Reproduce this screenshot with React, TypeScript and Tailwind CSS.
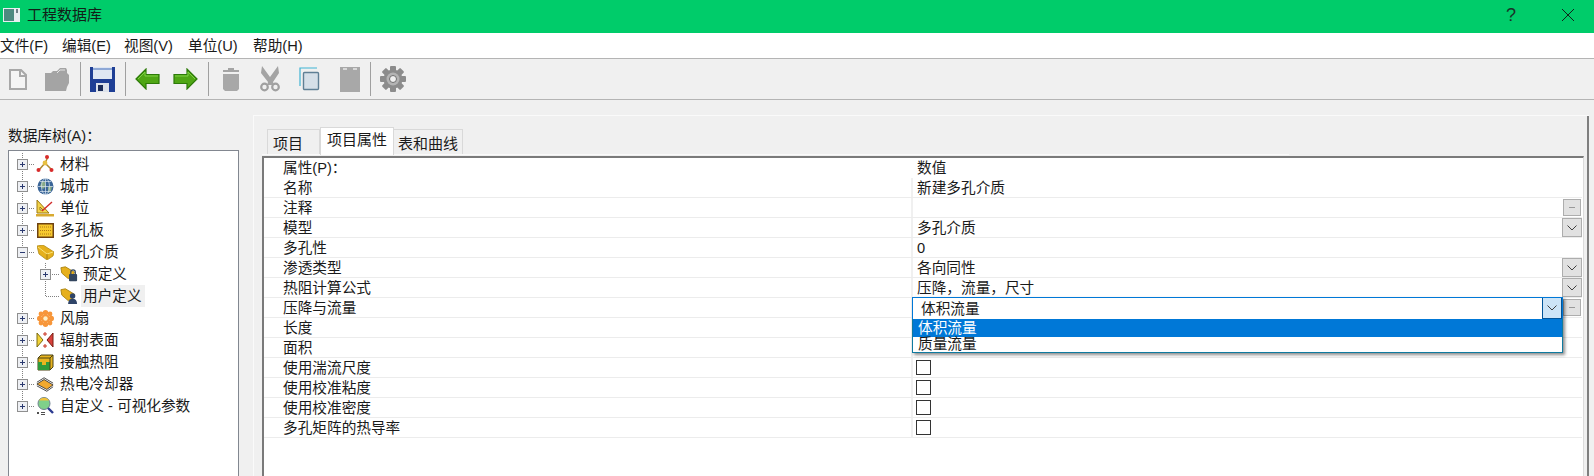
import React from "react";

const FONT = "font-['Liberation_Sans','Noto_Sans_CJK_SC',sans-serif]";

const Sep = () => <div className="w-px h-[34px] bg-[#a0a0a0] shrink-0" />;

const ToolBtn = ({ children, w = "w-[40px]" }: { children: React.ReactNode; w?: string }) => (
  <div className={`${w} h-[34px] flex items-center justify-center shrink-0`}>{children}</div>
);

const IconNew = () => (
  <svg width="18" height="21" viewBox="0 0 18 21">
    <path d="M1 1h11l5 5v14H1z" fill="#f4f4f4" stroke="#a8a8a8" strokeWidth="2" />
    <path d="M11 1v6h6" fill="none" stroke="#a8a8a8" strokeWidth="2" />
  </svg>
);
const IconOpen = () => (
  <svg width="25" height="25" viewBox="0 0 25 25">
    <path d="M1 6h6l2-2h4l3-3h6l1 2v3l2 2v8l-2 4-1 4H1z" fill="#a4a4a4" />
    <path d="M13 6l3-3h5" fill="none" stroke="#e4e4e4" strokeWidth="1" />
  </svg>
);
const IconSave = () => (
  <svg width="25" height="25" viewBox="0 0 25 25">
    <path d="M0 0h25v25H0z" fill="#1f3f95" />
    <path d="M3 0h19v12H3z" fill="#dfe7f3" />
    <path d="M3 1h19v2H3z" fill="#8ea8d6" />
    <path d="M6 16h13v9H6z" fill="#dde2ea" />
    <path d="M8 18h5v6H8z" fill="#1c2c58" />
  </svg>
);
const IconArrow = ({ dir }: { dir: "l" | "r" }) => (
  <svg width="25" height="22" viewBox="0 0 25 22" className={dir === "r" ? "-scale-x-100" : ""}>
    <path d="M1 11L11 1v5.500h13v9H11V21z" fill="#4fa614" stroke="#2c7a08" strokeWidth="1.200" />
    <path d="M3 11l7-7v4h13" fill="none" stroke="#7fd044" strokeWidth="1" />
  </svg>
);
const IconTrash = () => (
  <svg width="18" height="24" viewBox="0 0 18 24">
    <path d="M6 1h6v2h5v2H1V3h5z" fill="#a4a4a4" />
    <path d="M1 7h16v15l-2 2H3l-2-2z" fill="#a8a8a8" />
  </svg>
);
const IconCut = () => (
  <svg width="20" height="26" viewBox="0 0 20 26">
    <path d="M2 0l8 11 8-11 1 7-6 9 1 3H7l1-3-7-9z" fill="#a4a4a4" />
    <circle cx="4.500" cy="21" r="3.300" fill="#f0f0f0" stroke="#a0a0a0" strokeWidth="2.200" />
    <circle cx="15.500" cy="21" r="3.300" fill="#f0f0f0" stroke="#a0a0a0" strokeWidth="2.200" />
  </svg>
);
const IconCopy = () => (
  <svg width="21" height="24" viewBox="0 0 21 24">
    <path d="M1 19V1h17" fill="none" stroke="#3fb4d4" strokeWidth="1.200" />
    <rect x="4.500" y="5.500" width="15" height="17" rx="1" fill="#d5dfe8" stroke="#5f7f95" strokeWidth="1.400" />
  </svg>
);
const IconPaste = () => (
  <svg width="22" height="26" viewBox="0 0 22 26">
    <path d="M1 1h20v25H1z" fill="#a8a8a8" />
    <path d="M4 3h4M14 3h4" stroke="#e8e8e8" strokeWidth="1.400" />
  </svg>
);
const IconGear = () => (
  <svg width="26" height="26" viewBox="0 0 26 26">
    <g fill="#8c8c8c">
      <circle cx="13" cy="13" r="9.500" />
      <rect x="10" y="0" width="6" height="26" rx="1" />
      <rect x="10" y="0" width="6" height="26" rx="1" transform="rotate(45 13 13)" />
      <rect x="10" y="0" width="6" height="26" rx="1" transform="rotate(90 13 13)" />
      <rect x="10" y="0" width="6" height="26" rx="1" transform="rotate(135 13 13)" />
    </g>
    <circle cx="13" cy="13" r="6.500" fill="#b4b4b4" />
    <circle cx="13" cy="13" r="3.500" fill="#f0f0f0" stroke="#6e6e6e" />
  </svg>
);

const Box = ({ x, expander }: { x: number; expander: "+" | "-" }) => (
  <g>
    <rect x={x + 0.5} y="6.500" width="10" height="10" fill="#eef0f4" stroke="#8f8f8f" />
    <path d={`M${x + 3} 11.500h5`} stroke="#2b3a70" />
    {expander === "+" && <path d={`M${x + 5.500} 9v5`} stroke="#2b3a70" />}
  </g>
);

// 树节点前面的虚线和加减号
const Gutter = ({
  level,
  expander,
  last,
}: {
  level: number;
  expander?: "+" | "-";
  last?: boolean;
}) => (
  <svg width={level === 1 ? 46 : 70} height="22" viewBox={`0 0 ${level === 1 ? 46 : 70} 22`} className="shrink-0">
    {level === 2 ? (
      <>
        <path d="M13.500 0v22" stroke="#808080" strokeDasharray="1 1" />
        <path d={last ? "M36.500 0v11" : "M36.500 0v22"} stroke="#808080" strokeDasharray="1 1" />
        <path d="M37 11.500h14" stroke="#808080" strokeDasharray="1 1" />
        {expander && <Box x={31} expander={expander} />}
      </>
    ) : (
      <>
        <path d={last ? "M13.500 0v6" : "M13.500 0v22"} stroke="#808080" strokeDasharray="1 1" />
        <path d="M14 11.500h12" stroke="#808080" strokeDasharray="1 1" />
        {expander && <Box x={8} expander={expander} />}
      </>
    )}
  </svg>
);

const IcoMaterial = () => (
  <svg width="18" height="18" viewBox="0 0 18 18">
    <path d="M9 8L3 15M9 8l7 7M9 8l3-6" stroke="#b08a30" strokeWidth="1.500" />
    <circle cx="9" cy="8" r="2.400" fill="#e8c040" />
    <circle cx="2.500" cy="15" r="2" fill="#d82c2c" />
    <circle cx="15.500" cy="15" r="2" fill="#d82c2c" />
    <circle cx="11" cy="2" r="2" fill="#d82c2c" />
  </svg>
);
const IcoGlobe = () => (
  <svg width="17" height="17" viewBox="0 0 17 17">
    <circle cx="8.500" cy="8.500" r="8" fill="#3a6598" />
    <path d="M5 3l3 1 1 4-3 3-3-3zM11 9l4-1-1 5-3 2z" fill="#88aa88" />
    <path d="M8.500 .5v16M.5 8.500h16M3 3.500h11M3 13.500h11" stroke="#dbe6f0" strokeWidth=".7" />
    <ellipse cx="8.500" cy="8.500" rx="4" ry="8" fill="none" stroke="#dbe6f0" strokeWidth=".7" />
  </svg>
);
const IcoUnit = () => (
  <svg width="18" height="18" viewBox="0 0 18 18">
    <path d="M1 1v13l12 0z" fill="#f3d34a" stroke="#9c7a12" />
    <path d="M4 8v3h3z" fill="#fff" stroke="#9c7a12" />
    <path d="M6 12l10-9" stroke="#d02a2a" strokeWidth="1.400" />
    <path d="M0 15h18v2.500H0z" fill="#d8aa30" />
  </svg>
);
const IcoPlate = () => (
  <svg width="17" height="15" viewBox="0 0 17 15">
    <rect x=".75" y=".75" width="15.500" height="13.500" fill="#f7c92e" stroke="#6e4212" strokeWidth="1.500" />
    <path d="M3 4h11M3 7.500h11M3 11h11" stroke="#b07a18" strokeDasharray="1 1" />
  </svg>
);
const IcoPorous = () => (
  <svg width="17" height="15" viewBox="0 0 17 15">
    <path d="M0 1l6-1 11 7-1 4-6 4-8-6z" fill="#e6b01c" stroke="#b08a14" strokeWidth=".8" />
    <path d="M1 2l9 7 6-2" fill="none" stroke="#f8e27a" />
    <path d="M10 9v5" stroke="#a87c10" />
  </svg>
);
const IcoLock = () => (
  <svg width="20" height="18" viewBox="0 0 20 18">
    <path d="M1 2l5-1 10 6-2 5-5 2-7-6z" fill="#e6b01c" stroke="#a88210" />
    <rect x="10" y="9" width="9" height="8" rx="1" fill="#33465f" />
    <path d="M12 9V7a2.500 2.500 0 015 0v2" fill="none" stroke="#33465f" strokeWidth="1.400" />
  </svg>
);
const IcoUser = () => (
  <svg width="20" height="18" viewBox="0 0 20 18">
    <path d="M1 2l5-1 10 6-2 5-5 2-7-6z" fill="#e6b01c" stroke="#a88210" />
    <circle cx="14" cy="9" r="3" fill="#2f4468" />
    <path d="M9 18c0-4 2-6 5-6s5 2 5 6z" fill="#2f4468" />
  </svg>
);
const IcoFan = () => (
  <svg width="17" height="17" viewBox="0 0 17 17">
    <g fill="#f7963a">
      <circle cx="8.500" cy="2.700" r="2.700" />
      <circle cx="8.500" cy="14.300" r="2.700" />
      <circle cx="2.700" cy="8.500" r="2.700" />
      <circle cx="14.300" cy="8.500" r="2.700" />
      <circle cx="4" cy="4" r="2.400" />
      <circle cx="13" cy="4" r="2.400" />
      <circle cx="4" cy="13" r="2.400" />
      <circle cx="13" cy="13" r="2.400" />
      <circle cx="8.500" cy="8.500" r="4" />
    </g>
    <circle cx="8.500" cy="8.500" r="2.200" fill="#fdf0c8" />
  </svg>
);
const IcoRadiation = () => (
  <svg width="18" height="18" viewBox="0 0 18 18">
    <path d="M1 2l6 7-6 7z" fill="#f2d338" stroke="#7a6a12" />
    <path d="M17 2l-6 7 6 7z" fill="#d8413c" stroke="#7a1d12" />
    <path d="M9 1v4M9 13v4M7 3h4M7 15h4" stroke="#c8301f" />
  </svg>
);
const IcoContact = () => (
  <svg width="17" height="17" viewBox="0 0 17 17">
    <path d="M1 4l3-3h12v12l-3 3H1z" fill="#e8b420" stroke="#4a4212" />
    <path d="M1 8h12v8H1z" fill="#2f9a3a" />
    <path d="M5 8h4v3H5z" fill="#e8b420" />
    <path d="M13 4v12M1 4h12l3-3" fill="none" stroke="#4a4212" />
  </svg>
);
const IcoCooler = () => (
  <svg width="20" height="15" viewBox="0 0 20 15">
    <path d="M1 7l8-5 10 6-7 5z" fill="#f2a92e" stroke="#3a3a3a" />
    <path d="M1 5l8-5 10 6M1 9l11 6 7-5" fill="none" stroke="#3a3a3a" />
  </svg>
);
const IcoCustom = () => (
  <svg width="18" height="18" viewBox="0 0 18 18">
    <circle cx="8" cy="6.500" r="6" fill="#7fd08a" stroke="#70808f" />
    <path d="M3 3.500a6 6 0 0110 0z" fill="#f2c23a" />
    <path d="M12 11l5 5" stroke="#2b3a90" strokeWidth="2.400" />
    <path d="M1 15l2 2m0-2l-2 2M5 15.500h4M5 17.500h4" stroke="#222" strokeWidth=".8" />
  </svg>
);

const treeRows: {
  label: string;
  icon: React.ReactNode;
  level?: number;
  exp?: "+" | "-";
  last?: boolean;
  selected?: boolean;
}[] = [
  { label: "材料", icon: <IcoMaterial />, exp: "+" },
  { label: "城市", icon: <IcoGlobe />, exp: "+" },
  { label: "单位", icon: <IcoUnit />, exp: "+" },
  { label: "多孔板", icon: <IcoPlate />, exp: "+" },
  { label: "多孔介质", icon: <IcoPorous />, exp: "-" },
  { label: "预定义", icon: <IcoLock />, level: 2, exp: "+" },
  { label: "用户定义", icon: <IcoUser />, level: 2, last: true, selected: true },
  { label: "风扇", icon: <IcoFan />, exp: "+" },
  { label: "辐射表面", icon: <IcoRadiation />, exp: "+" },
  { label: "接触热阻", icon: <IcoContact />, exp: "+" },
  { label: "热电冷却器", icon: <IcoCooler />, exp: "+" },
  { label: "自定义 - 可视化参数", icon: <IcoCustom />, exp: "+", last: true },
];

const Chevron = () => (
  <svg width="10" height="6" viewBox="0 0 10 6">
    <path d="M.5.500L5 5 9.500.500" fill="none" stroke="#404040" />
  </svg>
);
const ComboBtn = () => (
  <div className="w-5 h-[19px] bg-[#e1e1e1] border border-[#adadad] flex items-center justify-center shrink-0">
    <Chevron />
  </div>
);
const DotBtn = () => (
  <div className="w-[18px] h-[17px] mr-px bg-[#e1e1e1] border border-[#adadad] flex items-center justify-center shrink-0">
    <div className="w-[6px] h-px bg-[#999]" />
  </div>
);
const Check = () => <div className="w-[15px] h-[15px] bg-white border border-[#333]" />;

const propRows: { name: string; value?: string; right?: React.ReactNode; check?: boolean; line?: boolean }[] = [
  { name: "属性(P)：", value: "数值" },
  { name: "名称", value: "新建多孔介质", line: true },
  { name: "注释", right: <DotBtn />, line: true },
  { name: "模型", value: "多孔介质", right: <ComboBtn />, line: true },
  { name: "多孔性", value: "0", line: true },
  { name: "渗透类型", value: "各向同性", right: <ComboBtn />, line: true },
  { name: "热阻计算公式", value: "压降，流量，尺寸", right: <ComboBtn />, line: true },
  { name: "压降与流量", right: <DotBtn />, line: true },
  { name: "长度", line: true },
  { name: "面积", line: true },
  { name: "使用湍流尺度", check: true, line: true },
  { name: "使用校准粘度", check: true, line: true },
  { name: "使用校准密度", check: true, line: true },
  { name: "多孔矩阵的热导率", check: true, line: true },
];

const PropRow = ({ row }: { row: (typeof propRows)[number] }) => (
  <div className={`h-5 flex shrink-0 ${row.line ? "border-b border-[#ececec]" : ""}`}>
    <div className={`w-[649px] pl-[19px] leading-[20px] ${row.line ? "border-r-2 border-[#f0f0f0]" : ""}`}>{row.name}</div>
    <div className={`flex-1 flex items-center justify-between min-w-0 leading-[20px] ${row.check ? "pl-[3px]" : "pl-[4px]"}`}>
      {row.check ? <Check /> : <span>{row.value}</span>}
      {row.right}
    </div>
  </div>
);

export default function App() {
  return (
    <div className={`w-[1594px] h-[476px] overflow-hidden bg-[#f0f0f0] text-[14.67px] text-[#1a1a1a] flex flex-col ${FONT}`}>
      <div className="h-[33px] bg-[#00cc6a] flex items-center shrink-0 pl-[3px] pb-[3px]">
        <svg width="17" height="14" viewBox="0 0 17 14" className="shrink-0">
          <rect width="17" height="14" fill="#e8eef0" />
          <rect x="1" y="1" width="10" height="12" fill="#4d8a80" />
          <rect x="13" y="1" width="2" height="4" fill="#6f8088" />
        </svg>
        <span className="ml-[7px] text-[15px] text-[#122018]">工程数据库</span>
        <div className="ml-auto flex items-center">
          <span className="w-[46px] text-center text-[18px] text-[#1a3328]">?</span>
          <svg width="14" height="14" viewBox="0 0 14 14" className="ml-[27px] mr-[19px]">
            <path d="M1 1l12 12M13 1L1 13" stroke="#10241a" />
          </svg>
        </div>
      </div>

      <div className="h-[26px] bg-white border-b border-[#b4b4b4] flex items-center shrink-0">
        <span className="w-[62px]">文件(F)</span>
        <span className="w-[62px]">编辑(E)</span>
        <span className="w-[64px]">视图(V)</span>
        <span className="w-[65px]">单位(U)</span>
        <span>帮助(H)</span>
      </div>

      <div className="h-[41px] border-b border-[#b4b4b4] flex items-center shrink-0">
        <ToolBtn w="w-[36px]"><IconNew /></ToolBtn>
        <ToolBtn w="w-[40px]"><IconOpen /></ToolBtn>
        <div className="w-[4px]" />
        <Sep />
        <div className="w-[1px]" />
        <ToolBtn><IconSave /></ToolBtn>
        <div className="w-[3px]" />
        <Sep />
        <div className="w-[2px]" />
        <ToolBtn w="w-[38px]"><IconArrow dir="l" /></ToolBtn>
        <ToolBtn w="w-[38px]"><IconArrow dir="r" /></ToolBtn>
        <div className="w-[4px]" />
        <Sep />
        <div className="w-[2px]" />
        <ToolBtn w="w-[39px]"><IconTrash /></ToolBtn>
        <ToolBtn w="w-[39px]"><IconCut /></ToolBtn>
        <ToolBtn><IconCopy /></ToolBtn>
        <ToolBtn w="w-[41px]"><IconPaste /></ToolBtn>
        <Sep />
        <div className="w-[2px]" />
        <ToolBtn><IconGear /></ToolBtn>
      </div>

      <div className="flex-1 flex min-h-0">
        <div className="w-[253px] shrink-0 pl-2 pr-[14px] pt-[26px] flex flex-col">
          <div className="h-[24px] leading-[20px]">数据库树(A)：</div>
          <div className="flex-1 bg-white border border-[#828790] pt-[2px] border-b-0">
            {treeRows.map((r) => (
              <div key={r.label} className="h-[22px] flex items-center">
                <Gutter level={r.level ?? 1} expander={r.exp} last={r.last} />
                <div className="-ml-[19px] w-[18px] h-[22px] flex items-center justify-center shrink-0">{r.icon}</div>
                <span
                  className={`leading-[22px] whitespace-nowrap mb-[1px] ${
                    r.selected
                      ? "ml-[3px] pl-[2px] pr-[3px] bg-[#f0f0f0]"
                      : r.level === 2
                        ? "ml-[5px]"
                        : "ml-[6px]"
                  }`}
                >
                  {r.label}
                </span>
              </div>
            ))}
          </div>
        </div>

        <div className="flex-1 min-w-0 mt-[15px] mr-[5px] border-l border-t border-[#fafafa] flex">
          <div className="flex-1 min-w-0 pl-[8px] pr-[3px] flex flex-col border-r-2 border-[#7f7f7f]">
            <div className="h-[39px] flex items-end shrink-0 pl-[5px] mr-[295px] border-b border-[#fafafa] text-[15px]">
              <div className="w-[53px] h-[25px] bg-[#f0f0f0] border border-b-0 border-[#d9d9d9] pl-[5px] leading-[27px]">项目</div>
              <div className="w-[74px] h-[28px] bg-white border border-b-0 border-[#d9d9d9] text-center leading-[24px] -mb-px z-10">项目属性</div>
              <div className="w-[69px] h-[25px] bg-[#f0f0f0] border border-b-0 border-l-0 border-[#d9d9d9] text-center leading-[27px]">表和曲线</div>
            </div>
            <div className="flex-1 min-h-0 mt-[1px] bg-white border-l-2 border-t-2 border-[#7a7a7a] border-r border-r-[#dcdcdc] flex flex-col relative">
              <div className="mr-px flex flex-col">
                {propRows.map((r) => <PropRow key={r.name} row={r} />)}
              </div>
              <div className="absolute left-[648px] top-[139px] w-[651px] z-10 shadow-[2px_2px_3px_rgba(0,0,0,0.45)]">
                <div className="h-[22px] bg-white border border-[#0078d7] border-b-0 flex items-center justify-between pl-[8px]">
                  <span>体积流量</span>
                  <div className="w-5 h-[21px] bg-[#cce4f7] border-x border-b border-[#005499] flex items-center justify-center">
                    <Chevron />
                  </div>
                </div>
                <div className="h-[34px] bg-white border-x border-b border-[#0f7a9f]">
                  <div className="h-[18px] bg-[#0078d7] text-white pl-[5px] leading-[18px]">体积流量</div>
                  <div className="h-[15px] pl-[5px] leading-[15px]">质量流量</div>
                </div>
              </div>
            </div>
          </div>
        </div>
      </div>
    </div>
  );
}
